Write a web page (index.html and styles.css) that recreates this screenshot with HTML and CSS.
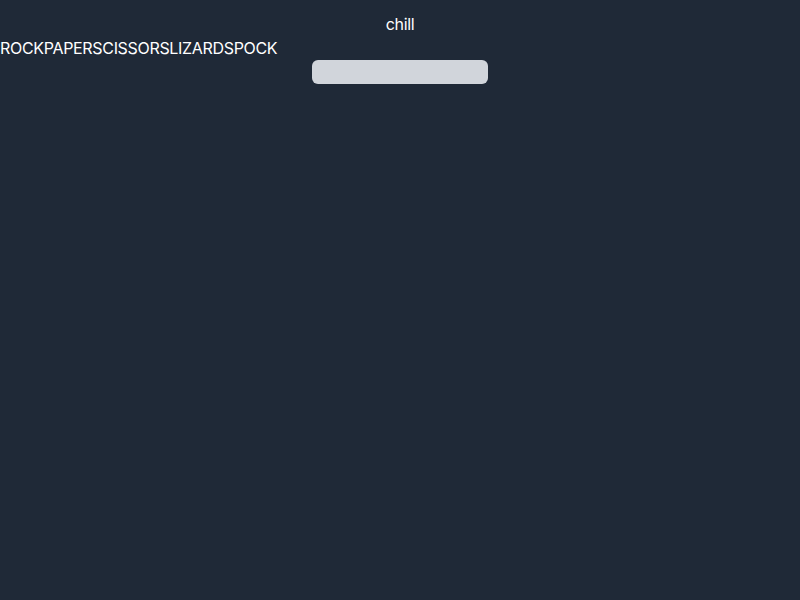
FILE: index.html
```html
<!DOCTYPE html>
<html>
<head>
<meta charset="utf-8">
<link rel="stylesheet" href="styles.css">
</head>
<body>
<div class="page">
  <div class="title">chill</div>
  <div class="choices"><span>ROCK</span><span>PAPER</span><span>SCISSORS</span><span>LIZARD</span><span>SPOCK</span></div>
  <div class="field"><input class="input" type="text"></div>
</div>
</body>
</html>
```
FILE: styles.css
```css
html, body {
  margin: 0;
  padding: 0;
  background: #1f2937;
  height: 100%;
}
.page {
  padding-top: 12px;
  font-family: Inter, "Liberation Sans", sans-serif;
  font-size: 16px;
  line-height: 24px;
  letter-spacing: -0.02em;
  color: #ffffff;
}
.title {
  text-align: center;
}
.choices {
  display: flex;
}
.field {
  display: flex;
  justify-content: center;
}
.input {
  width: 176px;
  height: 24px;
  box-sizing: border-box;
  border: none;
  border-radius: 6px;
  background: #d1d5db;
  padding: 0;
  margin: 0;
  outline: none;
}
```
